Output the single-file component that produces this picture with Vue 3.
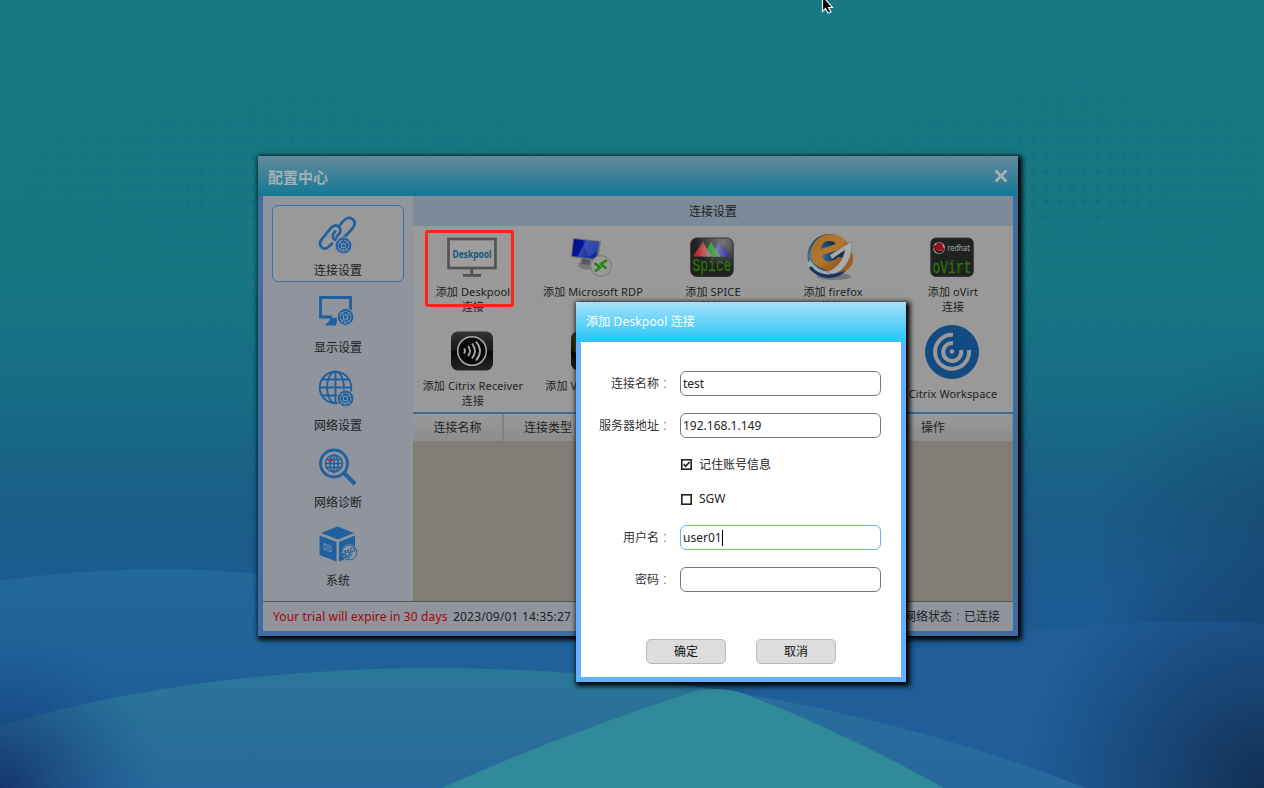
<script setup>
const navItems = [
  { id: 'link', label: '连接设置', active: true },
  { id: 'display', label: '显示设置' },
  { id: 'network', label: '网络设置' },
  { id: 'diagnose', label: '网络诊断' },
  { id: 'system', label: '系统' },
]
const connections = [
  { id: 'deskpool', label: '添加 Deskpool', second: '连接' },
  { id: 'rdp', label: '添加 Microsoft RDP', second: '连接' },
  { id: 'spice', label: '添加 SPICE', second: '连接' },
  { id: 'firefox', label: '添加 firefox', second: '连接' },
  { id: 'ovirt', label: '添加 oVirt', second: '连接' },
  { id: 'receiver', label: '添加 Citrix Receiver', second: '连接' },
  { id: 'vmware', label: '添加 VMware View', second: '连接' },
  { id: 'blank1', label: '' },
  { id: 'blank2', label: '' },
  { id: 'workspace', label: 'Citrix Workspace' },
]
const badges = { link: [25.5, 30.5], display: [27.5, 24], network: [27.5, 28.5] }
</script>

<template>
  <div class="desktop">
    <svg class="wallpaper" viewBox="0 0 1264 788" preserveAspectRatio="none">
      <defs>
        <linearGradient id="sky" x1="0" y1="0" x2="0" y2="1">
          <stop offset="0" stop-color="#177883" />
          <stop offset=".34" stop-color="#167783" />
          <stop offset=".5" stop-color="#176c86" />
          <stop offset=".65" stop-color="#1b5d87" />
          <stop offset=".76" stop-color="#1c5a92" />
          <stop offset="1" stop-color="#1d5b95" />
        </linearGradient>
        <linearGradient id="hillA" x1="0" y1="570" x2="0" y2="760" gradientUnits="userSpaceOnUse">
          <stop offset="0" stop-color="#226898" /><stop offset="1" stop-color="#1f5b9a" />
        </linearGradient>
        <linearGradient id="hillB" x1="0" y1="668" x2="0" y2="800" gradientUnits="userSpaceOnUse">
          <stop offset="0" stop-color="#2a7798" /><stop offset="1" stop-color="#28689b" />
        </linearGradient>
        <radialGradient id="cornerR" cx="1264" cy="788" r="240" gradientUnits="userSpaceOnUse">
          <stop offset="0" stop-color="#102a4b" stop-opacity=".9" /><stop offset="1" stop-color="#123259" stop-opacity="0" />
        </radialGradient>
        <radialGradient id="cornerL" cx="0" cy="788" r="160" gradientUnits="userSpaceOnUse">
          <stop offset="0" stop-color="#133066" stop-opacity=".9" /><stop offset="1" stop-color="#154a88" stop-opacity="0" />
        </radialGradient>
        <radialGradient id="sideR" cx="1290" cy="540" r="200" gradientUnits="userSpaceOnUse">
          <stop offset="0" stop-color="#15395f" stop-opacity=".5" /><stop offset="1" stop-color="#15395f" stop-opacity="0" />
        </radialGradient>
        <pattern id="dots" width="13" height="15" patternUnits="userSpaceOnUse">
          <circle cx="6" cy="7" r="2.200" fill="#0d6a8a" />
        </pattern>
        <radialGradient id="fade"><stop offset="0" stop-color="#fff" stop-opacity=".6" /><stop offset="1" stop-color="#fff" stop-opacity="0" /></radialGradient>
        <mask id="dotMask">
          <ellipse cx="290" cy="195" rx="270" ry="140" fill="url(#fade)" />
          <ellipse cx="1070" cy="195" rx="290" ry="150" fill="url(#fade)" />
        </mask>
      </defs>
      <rect width="1264" height="788" fill="url(#sky)" />
      <rect width="1264" height="400" fill="url(#dots)" mask="url(#dotMask)" />
      <rect x="900" y="300" width="364" height="488" fill="url(#sideR)" />
      <path d="M0 581Q80 569 165 569Q330 570 560 630L900 788H0Z" fill="url(#hillA)" />
      <path d="M760 690Q960 622 1200 621Q1235 621 1264 624V788H700Z" fill="#205d99" />
      <rect x="980" y="500" width="284" height="288" fill="url(#cornerR)" />
      <path d="M0 725Q200 668 440 668Q780 670 1086 788H0Z" fill="url(#hillB)" />
      <rect y="620" width="160" height="168" fill="url(#cornerL)" />
      <path d="M442 788Q560 735 690 693Q716 685 742 693Q840 730 944 788Z" fill="#318a99" />
      <path d="M742 693Q920 722 1086 788H944Q840 730 742 693Z" fill="#2967a0" fill-opacity=".45" />
    </svg>

    <section class="center-window">
      <header class="window-title">
        <span>配置中心</span>
        <svg width="14" height="14" viewBox="0 0 14 14"><path d="M1.500 1.500 12.500 12.500M12.500 1.500 1.500 12.500" stroke="#a9b1b4" stroke-width="2.700" /></svg>
      </header>
      <div class="window-body">
        <div class="columns">
          <nav>
            <div v-for="n in navItems" :key="n.id" class="nav-item" :class="{ active: n.active }">
              <svg class="nav-icon" width="40" height="40" viewBox="0 0 40 40" fill="none" stroke="#20609f">
                <g v-if="n.id === 'link'" stroke-width="2.700" stroke-linecap="round">
                  <path d="M14 28.500 10.500 32Q6 35.500 3 31.500Q.5 28 4 24L13 13Q18 8 21.500 12.500Q23.500 16 21 19L18.500 22" />
                  <path d="M17 25Q12.500 21.500 17 16.500M24 7.500Q30 0 35 4.500Q39 8.500 34 14L27 21.500Q22 26 18.500 24.500" />
                  <path d="M24 7.500 22 10" />
                </g>
                <g v-else-if="n.id === 'display'"><path d="M2.500 4.500H32.500V26H18L17 31H10L13 28V24H2.500Z" stroke-width="2.800" /><path d="M13 25H18V30H11Z" fill="#20609f" stroke="none" /></g>
                <g v-else-if="n.id === 'network'" stroke-width="1.900"><circle cx="17.500" cy="17.500" r="15.800" /><ellipse cx="17.500" cy="17.500" rx="8.500" ry="15.800" /><path d="M17.500 2V33M2 17.500H33M4.500 9.500H30.500M4.500 25.500H30.500" /></g>
                <g v-else-if="n.id === 'diagnose'"><circle cx="16" cy="15.500" r="13.500" stroke-width="2.800" /><path d="M26 25 37 36" stroke-width="4" /><g stroke-width="1.500"><circle cx="16" cy="15.500" r="8.500" /><ellipse cx="16" cy="15.500" rx="4.200" ry="8.500" /><path d="M16 7V24M7.500 15.500H24.500M9 11.500H23M9 19.500H23" /></g><circle cx="12.500" cy="12.500" r="1.800" fill="#a5283b" stroke="none" /></g>
                <g v-else stroke="none" fill="#20609f"><path d="M19.500 1.500 36 8 20 14.500 3 8Z" /><path d="M1.500 10.500 18.500 17V36.500L1.500 30Z" /><path d="M21 17 37 10.500V30L21 36.500Z" /><circle cx="31.500" cy="27.500" r="8.200" fill="#8f949d" /><g fill="none" stroke="#20609f"><circle cx="31.500" cy="27.500" r="7.400" stroke-width="1" /><circle cx="29.500" cy="29" r="3.400" stroke-width="2" stroke-dasharray="2 1" /><circle cx="29.500" cy="29" r="1.800" /><circle cx="34.500" cy="24.500" r="2" stroke-width="1.600" stroke-dasharray="1.400 .7" /></g><path d="M6 18.500 13 21V27L6 24.500ZM6 18.500 13 27M13 21 6 24.500" fill="none" stroke="#7890ab" stroke-width=".8" /></g>
                <g v-if="badges[n.id]" :transform="`translate(${badges[n.id][0]} ${badges[n.id][1]})`">
                  <circle r="8.500" fill="#20609f" stroke="#8f969f" stroke-width="1.200" />
                  <g stroke="#8f9ba8"><circle r="5.400" stroke-width="1" stroke-dasharray="3 1.200" /><rect x="-2" y="-2" width="4" height="4" rx="1" /><path d="M-2-2-5-5M2-2 5-5M-2 2-4.500 5.500M2 2 4.500 5.500M-1 4H1M-1 6.500H1" stroke-width=".9" /></g>
                </g>
              </svg>
              <span>{{ n.label }}</span>
            </div>
          </nav>
          <main>
            <h2>连接设置</h2>
            <div class="connection-grid">
              <div v-for="c in connections" :key="c.id" class="connection" :class="c.id">
                <svg v-if="c.id === 'deskpool'" class="ico" width="52" height="40" viewBox="0 0 52 40"><rect x="2.500" y="2" width="47" height="29" fill="#9d9d9d" stroke="#505352" stroke-width="2.600" /><path d="M25.800 31V38M17 38.400H35" stroke="#505352" stroke-width="2.800" /><text x="6.500" y="20.500" textLength="39" lengthAdjust="spacingAndGlyphs" class="deskpool-text">Deskpool</text></svg>
                <svg v-else-if="c.id === 'rdp'" class="ico" width="44" height="44" viewBox="0 0 44 44">
                  <defs><linearGradient id="scr" x2="1" y2=".4"><stop stop-color="#071075" /><stop offset=".45" stop-color="#0713a0" /><stop offset=".5" stop-color="#2e45ac" /><stop offset="1" stop-color="#102a92" /></linearGradient></defs>
                  <ellipse cx="17" cy="28" rx="9" ry="4.500" fill="#777a7b" /><path d="M12 21 11 27 19 28 21 21Z" fill="#555c60" />
                  <path d="M3 1 31 4 28 24 1 20Z" fill="#6a7079" /><path d="M4 2 29 5 26 22 2 19Z" fill="url(#scr)" /><path d="M13 3 29 5 27 14 18 20Z" fill="#637bd0" opacity=".3" />
                  <circle cx="31" cy="29" r="10.300" fill="#969b95" stroke="#777b78" /><path d="M24.500 26 30 30.500 25 34.500M37 23 31 27 36.500 31.500" fill="none" stroke="#258217" stroke-width="2.500" />
                </svg>
                <svg v-else-if="c.id === 'spice'" class="ico" width="44" height="40" viewBox="0 0 44 40">
                  <defs><radialGradient id="shine" cx=".75" cy=".1" r=".65"><stop stop-color="#777" /><stop offset="1" stop-color="#202120" /></radialGradient><linearGradient id="rd" x2="1"><stop stop-color="#b90f15" /><stop offset="1" stop-color="#b98b8b" /></linearGradient><linearGradient id="gr" x2="1"><stop stop-color="#16a41e" /><stop offset="1" stop-color="#75a17a" /></linearGradient><linearGradient id="bl" x2="1"><stop stop-color="#9a9ab5" /><stop offset="1" stop-color="#2c2ca0" /></linearGradient></defs>
                  <rect x=".7" y="1" width="42.500" height="38.500" rx="6" fill="url(#shine)" stroke="#333" /><path d="M22 19.500 29 4.500 40 19.500Z" fill="url(#bl)" /><path d="M13 19.500 21 5 30 19.500Z" fill="url(#gr)" /><path d="M2.500 19.500 13 5 21.500 19.500Z" fill="url(#rd)" /><text x="2.500" y="33.500" class="mono-text" textLength="39" lengthAdjust="spacingAndGlyphs">Spice</text>
                </svg>
                <svg v-else-if="c.id === 'firefox'" class="ico fox" width="50" height="48" viewBox="0 0 50 48">
                  <defs><radialGradient id="globe" cx=".2" cy=".5"><stop stop-color="#91a8b1" /><stop offset=".45" stop-color="#285e83" /><stop offset="1" stop-color="#102b50" /></radialGradient><linearGradient id="orange" y2="1"><stop stop-color="#a36a2a" /><stop offset=".5" stop-color="#b3782e" /><stop offset="1" stop-color="#8c4512" /></linearGradient></defs>
                  <ellipse cx="29" cy="43.500" rx="17" ry="3.500" fill="#555" opacity=".55" /><circle cx="24.500" cy="23" r="22" fill="url(#globe)" /><path d="M2 31Q12 49 35 40L31 37Q15 42 5 27Z" fill="#a4a9ac" /><path d="M5 34Q17 49 37 39" fill="none" stroke="#163667" stroke-width="3" />
                  <path d="M44 14C40 2 27-2 17 3C5 9 3 24 10 31C19 40 35 37 42 25L33 24C28 31 17 29 17 22L44 14ZM16 16Q17 8 24 8Q29 8 31 11Z" fill="url(#orange)" fill-rule="evenodd" /><path d="M41 25 47 20Q51 33 40 38Q26 43 15 34Q30 38 41 25Z" fill="#a35d1c" />
                  <path d="M25 22 47 8Q48 28 35 38Q28 43 22 39Q37 33 40 17Q34 21 27 26Z" fill="#a9abab" stroke="#666" stroke-width=".5" />
                </svg>
                <svg v-else-if="c.id === 'ovirt'" class="ico" width="44" height="40" viewBox="0 0 44 40">
                  <rect x=".8" y="1" width="42.500" height="38.500" rx="5" fill="#202221" stroke="#343635" /><circle cx="9" cy="11" r="6" fill="#a0a0a0" /><path d="M3 11Q1 9 6 8Q7 4 10 6Q13 6 13 10L15 12Q13 15 7 13Z" fill="#9b1119" /><path d="M4 11Q9 16 14 13Q12 17 8 16Q5 15 4 11Z" fill="#171819" /><text x="17.500" y="14" class="redhat-text" textLength="22.500" lengthAdjust="spacingAndGlyphs">redhat</text><text x="2.500" y="35.500" class="mono-text" textLength="39" lengthAdjust="spacingAndGlyphs">oVirt</text>
                </svg>
                <svg v-else-if="c.id === 'receiver' || c.id === 'vmware'" class="ico" width="44" height="40" viewBox="0 0 44 40">
                  <defs><linearGradient id="black" x2="0" y2="1"><stop stop-color="#333" /><stop offset=".48" stop-color="#171717" /><stop offset=".52" stop-color="#080808" /><stop offset="1" stop-color="#252525" /></linearGradient></defs>
                  <rect x="1" y=".5" width="42" height="39" rx="7" fill="url(#black)" />
                  <g v-if="c.id === 'receiver'" fill="none" stroke="#aaa"><circle cx="22" cy="20" r="14.300" fill="#080808" stroke-width="1.500" /><path d="M14 17.500Q16 20 14 22.500M18 15Q22 20 18 25M22 12.500Q28 20 22 27.500M26 10.500Q34 20 26 29.500" stroke-width="1.800" /></g>
                  <rect v-else x="5" y="4" width="30" height="18" rx="2" fill="#263617" stroke="#556e26" />
                </svg>
                <svg v-else-if="c.id === 'workspace'" class="ico big" width="54" height="54" viewBox="0 0 54 54"><circle cx="27" cy="27" r="27" fill="#124a82" /><g fill="none" stroke="#999" stroke-width="4"><path d="M28 9.800A17 17 0 1 0 44 25" /><path d="M28 18A9 9 0 1 0 36 25" /></g><circle cx="27" cy="26.500" r="2.300" fill="#999" /></svg>
                <p>{{ c.label }}<template v-if="c.second"><br />{{ c.second }}</template></p>
              </div>
            </div>
            <div class="table-head">
              <span class="c1">连接名称</span><span class="c2">连接类型</span><span class="c3"></span><span class="c4">操作</span>
            </div>
            <div class="table-body"></div>
          </main>
        </div>
        <footer>
          <span class="trial">Your trial will expire in 30 days</span><span class="date">2023/09/01 14:35:27</span>
          <span class="state">网络状态<i>：</i>已连接</span>
        </footer>
      </div>
    </section>

    <div class="highlight"></div>

    <section class="dialog">
      <header>添加 Deskpool 连接</header>
      <form @submit.prevent>
        <div class="field"><label>连接名称<i>：</i></label><div class="input">test</div></div>
        <div class="field"><label>服务器地址<i>：</i></label><div class="input">192.168.1.149</div></div>
        <div class="check remember"><svg width="11" height="11" viewBox="0 0 11 11" fill="none" stroke="#222"><rect x=".8" y=".8" width="9.400" height="9.400" stroke-width="1.600" /><path d="M2.700 5 4.700 7.300 8.600 3" stroke-width="1.700" /></svg><span>记住账号信息</span></div>
        <div class="check"><svg class="low" width="11" height="11" viewBox="0 0 11 11" fill="none" stroke="#222"><rect x=".8" y=".8" width="9.400" height="9.400" stroke-width="1.600" /></svg><span>SGW</span></div>
        <div class="field"><label>用户名<i>：</i></label><div class="input focus">user01<b class="caret"></b></div></div>
        <div class="field"><label>密码<i>：</i></label><div class="input"></div></div>
        <div class="actions"><button type="button">确定</button><button type="button">取消</button></div>
      </form>
    </section>

    <svg class="cursor" width="14" height="15" viewBox="0 0 14 15"><path d="M1.500-4V11.500L4.500 8.500 7 13 10 12 7.500 7.500H11.500L1.500-4Z" fill="#050505" stroke="#eee" stroke-width="1.200" /></svg>
  </div>
</template>

<style>
body { overflow: hidden; }
</style>

<style scoped>
* { box-sizing: border-box; }
.desktop { position: relative; width: 1264px; height: 788px; overflow: hidden; font: 12px/16px "Noto Sans", "Noto Sans CJK SC", sans-serif; color: #222; }
.wallpaper { position: absolute; inset: 0; width: 100%; height: 100%; }
i { font-style: normal; font-family: "Noto Sans CJK TC", sans-serif; font-weight: 300; line-height: 1; vertical-align: -1px; opacity: .8; }
.center-window { position: absolute; left: 258px; top: 156px; width: 760px; height: 480px; display: flex; flex-direction: column; background: #3e6ea0; box-shadow: 2px 2px 5px 2px #000; }
.window-title { height: 40px; flex: none; display: flex; align-items: center; justify-content: space-between; padding: 1px 10px 0; background: linear-gradient(#64899b, #117997); color: #a3b0b5; font-size: 15px; font-weight: 700; }
.window-title svg { margin-top: -2px; }
.window-body { flex: 1; margin: 0 5px 5px; display: flex; flex-direction: column; background: #8f949d; }
.columns { height: 405px; display: flex; }
nav { width: 150px; padding: 9px 9px 0; }
.nav-item { height: 77.500px; display: flex; flex-direction: column; align-items: center; border: 1px solid transparent; border-radius: 6px; }
.nav-item.active { border-color: #3a70aa; background: #999; height: 77px; margin-bottom: .5px; }
.nav-icon { margin: 9px 0 7.500px; flex: none; }
main { flex: 1; display: flex; flex-direction: column; background: #999; }
h2 { margin: 0; height: 30px; font-size: 12px; font-weight: 400; line-height: 31px; text-align: center; background: #7c8a99; }
.connection-grid { height: 186px; display: grid; grid-template-columns: repeat(5, 120px); grid-template-rows: 93px 93px; }
.connection { display: flex; flex-direction: column; align-items: center; padding-top: 11px; }
.ico { flex: none; margin: 0 3px 7px 0; overflow: visible; }
.receiver .ico, .vmware .ico { margin-top: 1px; margin-bottom: 6.500px; }
.rdp .ico { margin-bottom: 3px; }
.connection .fox { margin: -4px 6px 3px 0; }
.connection .big { margin-top: -5px; margin-bottom: 7px; }
.connection p { margin: 0; font-size: 11px; line-height: 15px; letter-spacing: .12px; text-align: center; white-space: nowrap; }
.deskpool-text { font: 700 11px "Noto Sans", sans-serif; fill: #17577a; }
.mono-text { font: 18px "Liberation Mono", monospace; fill: #2d7608; stroke: #2d7608; stroke-width: .3px; }
.redhat-text { font: 8px "DejaVu Sans", sans-serif; fill: #aaa; }
.table-head { height: 29px; display: flex; border-top: 2px solid #3c6b99; background: linear-gradient(#999, #8d8d8d); line-height: 28px; }
.table-head span { border-right: 2px solid #828282; }
.table-head .c1 { width: 91px; text-align: center; }
.table-head .c2 { width: 94px; padding-left: 20px; }
.table-head .c3 { width: 252px; }
.table-head .c4 { flex: 1; padding-left: 71px; border-right: 1px solid #888; }
.table-body { flex: 1; background: #7f7d76; }
footer { flex: 1; border-top: 1px solid #555753; display: flex; align-items: center; padding: 0 13px 0 10px; }
.trial { color: #a80507; width: 180px; white-space: nowrap; letter-spacing: .12px; }
.date { letter-spacing: .18px; }
.state { margin-left: auto; padding-top: 1px; }
.highlight { position: absolute; left: 425px; top: 230px; width: 89px; height: 77px; border: 3px solid #ff2418; border-radius: 3px; }
.dialog { position: absolute; left: 576px; top: 302px; width: 330px; height: 380px; display: flex; flex-direction: column; background: #64b1ff; box-shadow: 2px 2px 5px 2px #000; }
.dialog header { height: 40px; line-height: 39px; padding-left: 10px; letter-spacing: .15px; color: #fff; background: linear-gradient(#a4e0f8, #27c5f7); }
form { flex: 1; margin: 0 5px 5px; padding-top: 29px; background: #fff; display: flex; flex-direction: column; }
.field { height: 25px; margin-bottom: 17px; display: flex; align-items: center; }
label { width: 90px; margin-right: 9px; padding-top: 1px; text-align: right; white-space: nowrap; color: #333; }
.input { width: 201px; height: 25px; border: 1px solid #777; border-radius: 6px; padding-left: 2px; line-height: 23px; display: flex; align-items: center; }
.input.focus { border-color: #64b1ff; }
.caret { width: 1px; height: 16px; background: #000; }
.check { margin-left: 100px; height: 16px; display: flex; align-items: center; gap: 7px; margin-bottom: 19px; }
.check span { padding-top: 1px; }
.check.remember { margin-top: 1px; margin-bottom: 18px; }
.low { margin-top: 2px; }
.actions { display: flex; gap: 30px; padding-left: 65px; margin-top: 30px; }
button { width: 80px; height: 25px; border: 1px solid #b9b9b9; border-radius: 5px; background: #ddd; color: #111; font: inherit; padding: 1px 0 0; }
.cursor { position: absolute; left: 821px; top: 0; }
</style>
